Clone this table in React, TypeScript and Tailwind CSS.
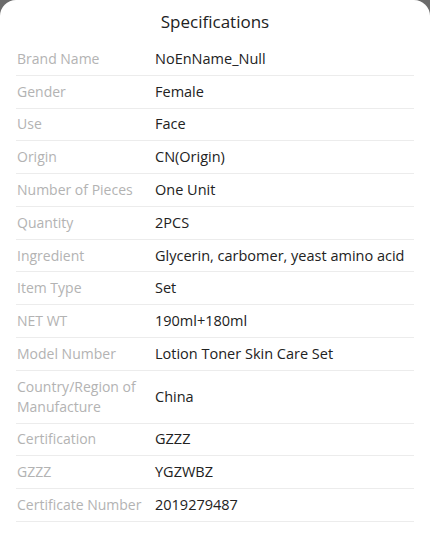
const specs: [string, string][] = [
  ["Brand Name", "NoEnName_Null"],
  ["Gender", "Female"],
  ["Use", "Face"],
  ["Origin", "CN(Origin)"],
  ["Number of Pieces", "One Unit"],
  ["Quantity", "2PCS"],
  ["Ingredient", "Glycerin, carbomer, yeast amino acid"],
  ["Item Type", "Set"],
  ["NET WT", "190ml+180ml"],
  ["Model Number", "Lotion Toner Skin Care Set"],
  ["Country/Region of Manufacture", "China"],
  ["Certification", "GZZZ"],
  ["GZZZ", "YGZWBZ"],
  ["Certificate Number", "2019279487"],
];

export default function App() {
  return (
    <div className="h-[550px] w-[430px] overflow-hidden bg-[#6b6b6b]">
      <div
        className="h-full rounded-t-2xl bg-white"
        style={{ fontFamily: '"Open Sans", "Noto Sans", sans-serif' }}
      >
        <h1 className="flex h-[43px] items-center justify-center pt-[1px] text-[17px] text-[#222]">
          Specifications
        </h1>
        <div className="px-4">
          {specs.map(([label, value]) => (
            <div
              key={label}
              className="flex items-center border-b border-[#ececec] py-[5.9px] leading-5"
            >
              <div className="w-[139px] shrink-0 pl-[1px] pr-2 text-[14px] text-[#b3b3b3]">{label}</div>
              <div className="text-[14.5px] text-[#222]">{value}</div>
            </div>
          ))}
        </div>
      </div>
    </div>
  );
}
